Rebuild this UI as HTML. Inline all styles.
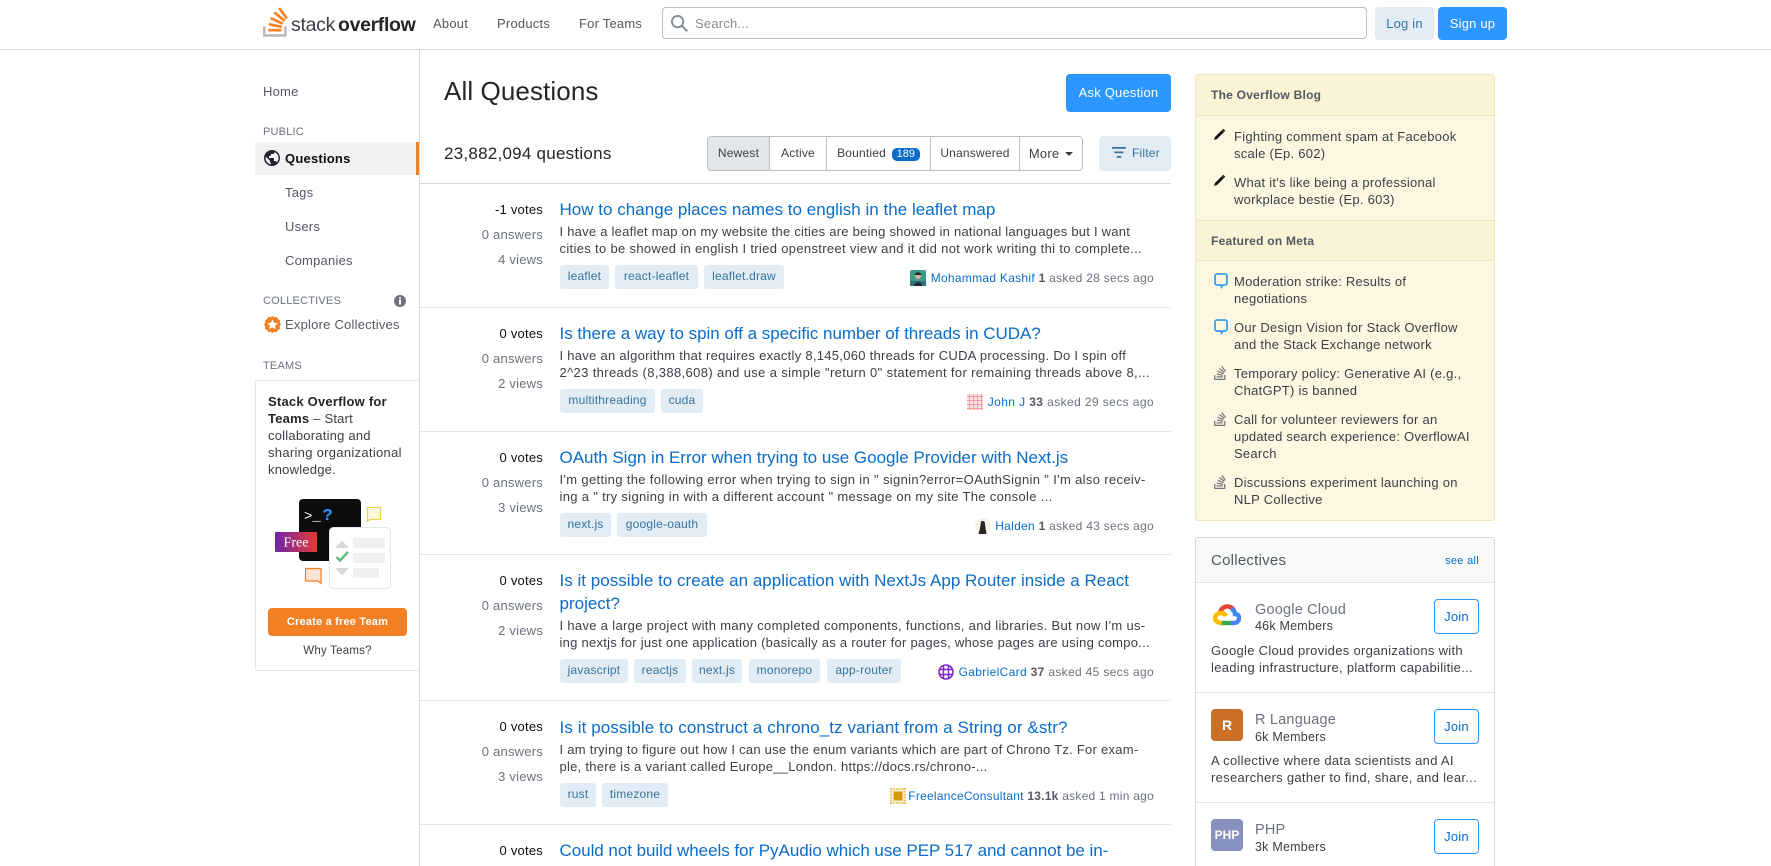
<!DOCTYPE html>
<html lang="en"><head><meta charset="utf-8"><title>All Questions - Stack Overflow</title>
<style>
*{box-sizing:border-box}
html,body{margin:0;padding:0;width:1771px;height:866px;overflow:hidden;background:#fff;font-family:"Liberation Sans",sans-serif;color:#3b4045}
#p{position:relative;width:1771px;height:866px;overflow:hidden;background:#fff}
a{color:inherit;text-decoration:none}
.t{position:absolute;white-space:nowrap;line-height:20px;height:20px;margin-top:-9px;font-size:13px;letter-spacing:.22px}
.b{position:absolute}
.title{font-size:17px;color:#0a6cc9;letter-spacing:0;left:559.5px}
.ex{color:#3b4045;left:559.5px;letter-spacing:.24px;margin-top:-10px}
.st{right:1228px;color:#6a737c;text-align:right}
.vt{color:#0c0d0e}
.tag{position:absolute;height:24px;line-height:23px;background:#e1ecf4;color:#39739d;border-radius:3px;font-size:12px;text-align:center;letter-spacing:.2px;white-space:nowrap}
.meta{right:617px;font-size:12px;color:#6a737c;letter-spacing:.28px;margin-top:-10px}
.meta a{color:#0a6cc9}.meta b{color:#525960}
.sep{position:absolute;left:420px;width:751px;height:1px;background:#e3e6e8}
.nav{color:#525960}
.sec{font-size:11px;color:#6a737c;letter-spacing:.2px}
.y{color:#3b4045;left:1234px;letter-spacing:.26px;margin-top:-10px}
.h{left:1211px;font-weight:bold;font-size:12px;color:#525960;letter-spacing:.25px;margin-top:-10px}
.d{left:1211px;letter-spacing:.3px;color:#3b4045}
.cn{left:1255px;font-size:14.5px;color:#6a737c;letter-spacing:.2px}
.cm{left:1255px;font-size:12.5px;color:#3b4045;letter-spacing:.22px}
.join{position:absolute;left:1434px;width:45px;height:35px;line-height:33px;text-align:center;border:1px solid #2c97ff;border-radius:4px;color:#0a6cc9;font-size:13px;letter-spacing:.2px;background:#fff}
.fb{height:100%;text-align:center;line-height:33px;font-size:12px;color:#3b4045;border-right:1px solid #babfc4;letter-spacing:.2px;white-space:nowrap;flex:none}
</style></head><body><div id="p">

<!-- header -->
<div class="b" style="left:0;top:49px;width:1771px;height:1px;background:#d6d9dc"></div>
<svg class="b" style="left:263px;top:7px" width="25" height="30" viewBox="22.6 15 73.1 86.5"><polygon fill="#BCBBBB" points="84.4,93.8 84.4,70.6 92.1,70.6 92.1,101.5 22.6,101.5 22.6,70.6 30.3,70.6 30.3,93.8"/><path fill="#F48024" d="M38.8,68.4l37.8,7.9l1.6-7.6l-37.8-7.9L38.8,68.4z M43.8,50.4l35,16.3l3.2-7l-35-16.4L43.8,50.4z M53.5,33.2l29.7,24.7l4.9-5.9L58.4,27.3L53.5,33.2z M72.7,15l-6.2,4.6l23,31l6.2-4.6L72.7,15z M38,86h38.6v-7.7H38V86z"/></svg>
<div class="t" style="left:291px;top:24px;font-size:19.5px;color:#3b4045;letter-spacing:-.3px">stack<b style="color:#232629;margin-left:3px;letter-spacing:-.35px">overflow</b></div>
<a class="t nav" style="left:433px;top:23px">About</a>
<a class="t nav" style="left:497px;top:23px">Products</a>
<a class="t nav" style="left:579px;top:23px">For Teams</a>
<div class="b" style="left:662px;top:7px;width:705px;height:32px;border:1px solid #babfc4;border-radius:4px;background:#fff"></div>
<svg class="b" style="left:671px;top:15px" width="17" height="17" viewBox="0 0 18 18"><path fill="#838c95" d="m18 16.5-5.14-5.18h-.35a7 7 0 1 0-1.19 1.19v.35L16.5 18l1.5-1.5ZM12 7A5 5 0 1 1 2 7a5 5 0 0 1 10 0Z"/></svg>
<div class="t" style="left:695px;top:23px;color:#838c95">Search...</div>
<a class="b" style="left:1375px;top:7px;width:59px;height:33px;line-height:33px;background:#e1ecf4;color:#39739d;border-radius:4px;text-align:center;font-size:13px;letter-spacing:.2px">Log in</a>
<a class="b" style="left:1438px;top:7px;width:69px;height:33px;line-height:33px;background:#2c97ff;color:#fff;border-radius:4px;text-align:center;font-size:13px;letter-spacing:.2px">Sign up</a>

<!-- left nav -->
<div class="b" style="left:419px;top:50px;width:1px;height:816px;background:#d6d9dc"></div>
<a class="t nav" style="left:263px;top:91px">Home</a>
<div class="t sec" style="left:263px;top:131px">PUBLIC</div>
<div class="b" style="left:255px;top:142px;width:164px;height:33px;background:#f1f2f3;border-right:3px solid #f48024"></div>
<svg class="b" style="left:263px;top:149px" width="18" height="18" viewBox="0 0 18 18"><path fill="#232629" d="M9 1C4.64 1 1 4.64 1 9c0 4.36 3.64 8 8 8 4.36 0 8-3.64 8-8 0-4.36-3.64-8-8-8ZM8 15.32a6.46 6.46 0 0 1-4.3-2.74 6.46 6.46 0 0 1-.93-5.01L7 11.8v.8c0 .88.12 1.32 1 1.32v1.4Zm5.72-2.02c-.24-.74-.9-1.3-1.72-1.3h-1V9.7c0-.44-.36-.7-.8-.7H6V7h1c.44 0 1-.56 1-1V5h2c.88 0 1.4-.72 1.4-1.6v-.33a6.45 6.45 0 0 1 3.83 3.84 6.45 6.45 0 0 1-1.51 6.39Z"/></svg>
<a class="t" style="left:285px;top:158px;font-weight:bold;color:#0c0d0e">Questions</a>
<a class="t nav" style="left:285px;top:192px">Tags</a>
<a class="t nav" style="left:285px;top:226px">Users</a>
<a class="t nav" style="left:285px;top:260px">Companies</a>
<div class="t sec" style="left:263px;top:300px">COLLECTIVES</div>
<svg class="b" style="left:394px;top:295px" width="12" height="12" viewBox="0 0 12 12"><circle cx="6" cy="6" r="6" fill="#6a737c"/><rect x="5" y="5" width="2" height="4.6" fill="#fff"/><rect x="5" y="2.4" width="2" height="1.8" fill="#fff"/></svg>
<svg class="b" style="left:264px;top:316px" width="17" height="17" viewBox="0 0 17 17"><path fill="#f48024" d="M8.5 0l2 1.300 2.400-.300 1.100 2.100 2.100 1.100-.300 2.400L17 8.500l-1.300 2 .300 2.400-2.100 1.100-1.100 2.100-2.400-.300-1.900 1.200-2-1.300-2.400.300L3 14l-2.100-1.100.300-2.400L0 8.500l1.300-2L1 4.100 3.100 3l1.100-2.100 2.400.300z"/><path fill="#fff" d="M8.500 3.200l1.600 3.500 3.700.400-2.800 2.500.800 3.700-3.300-1.900-3.300 1.900.800-3.700-2.800-2.500 3.700-.400z"/></svg>
<a class="t nav" style="left:285px;top:324px">Explore Collectives</a>
<div class="t sec" style="left:263px;top:365px">TEAMS</div>
<div class="b" style="left:255px;top:380px;width:165px;height:291px;border:1px solid #e3e6e8;border-right:none;border-radius:3px 0 0 3px"></div>
<div class="t" style="left:268px;top:401px;color:#232629;font-weight:bold">Stack Overflow for</div>
<div class="t" style="left:268px;top:418px"><b style="color:#232629">Teams</b> – Start</div>
<div class="t" style="left:268px;top:435px">collaborating and</div>
<div class="t" style="left:268px;top:452px;letter-spacing:.3px">sharing organizational</div>
<div class="t" style="left:268px;top:469px">knowledge.</div>
<svg class="b" style="left:270px;top:495px;font-family:'Liberation Mono',monospace" width="130" height="100" viewBox="270 495 130 100">
<defs><linearGradient id="fg" x1="0" x2="1"><stop offset="0" stop-color="#6f25a8"/><stop offset="1" stop-color="#e23b33"/></linearGradient></defs>
<rect x="299" y="499" width="62" height="62" rx="4" fill="#0b0c0e"/>
<text x="304" y="520" font-size="14" fill="#fff">&gt;_</text><text x="322.500" y="520" font-size="17" font-weight="bold" fill="#2c97ff">?</text>
<rect x="275" y="532" width="42" height="20" rx="1" fill="url(#fg)"/>
<text x="296" y="546.500" font-size="14" text-anchor="middle" fill="#fff" style="font-family:'Liberation Serif',serif">Free</text>
<rect x="329.500" y="527.500" width="61" height="61" rx="4" fill="#fff" stroke="#e3e6e8"/>
<path fill="#d6d9dc" d="M335 548l7-7.500 7 7.500zM335 568h14l-7 7.500z"/>
<path fill="none" stroke="#5eba7d" stroke-width="2.400" d="M336.500 557l3.500 3.500 8-8.500"/>
<rect x="353" y="538" width="32" height="10" fill="#eff0f1"/><rect x="353" y="553" width="32" height="10" fill="#eff0f1"/><rect x="353" y="568" width="26" height="10" fill="#eff0f1"/>
<path fill="#fdf7e2" stroke="#f4cf5a" stroke-width="1.200" d="M367.500 507.500h13v12h-10.500l-2.500 2z"/>
<path fill="#fbe3d8" stroke="#f48024" stroke-width="1.200" d="M305.500 568.500h15.500v15l-3-2.500h-12.500z"/>
</svg>
<a class="b" style="left:268px;top:608px;width:139px;height:28px;line-height:29px;background:#f48024;color:#fff;border-radius:4px;text-align:center;font-size:11px;font-weight:bold;letter-spacing:.2px">Create a free Team</a>
<a class="t" style="left:268px;width:139px;text-align:center;top:650px;font-size:11.500px">Why Teams?</a>

<!-- main head -->
<h1 class="t" style="left:444px;top:90px;margin:-9px 0 0;font-size:26px;font-weight:normal;color:#232629;letter-spacing:.1px">All Questions</h1>
<a class="b" style="left:1066px;top:74px;width:105px;height:38px;line-height:38px;background:#2c97ff;color:#fff;border-radius:4px;text-align:center;font-size:13px;letter-spacing:.2px">Ask Question</a>
<div class="t" style="left:444px;top:153px;font-size:17px;color:#232629;letter-spacing:.25px">23,882,094 questions</div>
<div class="b" style="left:707px;top:136px;width:376px;height:35px;border:1px solid #babfc4;border-radius:4px;display:flex;overflow:hidden">
<div class="fb" style="width:62px;background:#e3e6e8;color:#3b4045">Newest</div>
<div class="fb" style="width:57px">Active</div>
<div class="fb" style="width:104px">Bountied <span style="display:inline-block;background:#0a6cc9;color:#fff;border-radius:5px;font-size:11px;line-height:13px;padding:0 5px;margin-left:2px;letter-spacing:0">189</span></div>
<div class="fb" style="width:89px">Unanswered</div>
<div class="fb" style="flex:1;border:none;font-size:13px">More <span style="display:inline-block;border:4px solid transparent;border-top-color:#3b4045;border-bottom:none;margin:0 0 2px 2px"></span></div>
</div>
<a class="b" style="left:1099px;top:136px;width:72px;height:35px;background:#e1ecf4;border-radius:4px;color:#39739d;font-size:12px;line-height:35px;padding-left:33px;letter-spacing:.2px">Filter</a>
<svg class="b" style="left:1112px;top:147px" width="14" height="11" viewBox="0 0 14 11"><path fill="#39739d" d="M0 0h14v1.800H0zM2.500 4.500h9v1.800h-9zM4.800 9h4.400v1.800H4.800z"/></svg>
<div class="sep" style="top:183px;background:#d6d9dc"></div>

<!-- Q1 -->
<div class="t st vt" style="top:209px">-1 votes</div><div class="t st" style="top:234px">0 answers</div><div class="t st" style="top:259px">4 views</div>
<a class="t title" style="top:209px;letter-spacing:.02px">How to change places names to english in the leaflet map</a>
<div class="t ex" style="top:232px">I have a leaflet map on my website the cities are being showed in national languages but I want</div>
<div class="t ex" style="top:249px;letter-spacing:.33px">cities to be showed in english I tried openstreet view and it did not work writing thi to complete...</div>
<a class="tag" style="left:560px;top:265px;width:49px">leaflet</a><a class="tag" style="left:615px;top:265px;width:83px">react-leaflet</a><a class="tag" style="left:704px;top:265px;width:80px">leaflet.draw</a>
<svg class="b" style="left:910px;top:270px" width="16" height="16" viewBox="0 0 16 16"><rect width="16" height="16" rx="2" fill="#3f9a8e"/><rect y="11" width="16" height="5" fill="#2f6f78"/><circle cx="8" cy="6" r="3.200" fill="#c9b49a"/><path fill="#1d2a33" d="M4.500 5C5 1.500 11 1.500 11.500 5zM4 16c0-5 8-5 8 0z"/></svg>
<div class="t meta" style="top:278px"><a>Mohammad Kashif</a> <b>1</b> asked 28 secs ago</div>
<div class="sep" style="top:307px"></div>
<!-- Q2 -->
<div class="t st vt" style="top:333px">0 votes</div><div class="t st" style="top:358px">0 answers</div><div class="t st" style="top:383px">2 views</div>
<a class="t title" style="top:333px;letter-spacing:-.02px">Is there a way to spin off a specific number of threads in CUDA?</a>
<div class="t ex" style="top:356px;letter-spacing:.28px">I have an algorithm that requires exactly 8,145,060 threads for CUDA processing. Do I spin off</div>
<div class="t ex" style="top:373px;letter-spacing:.36px">2^23 threads (8,388,608) and use a simple "return 0" statement for remaining threads above 8,...</div>
<a class="tag" style="left:560px;top:389px;width:95px">multithreading</a><a class="tag" style="left:661px;top:389px;width:42px">cuda</a>
<svg class="b" style="left:967px;top:394px" width="16" height="16" viewBox="0 0 16 16"><rect width="16" height="16" fill="#fde4e6"/><path stroke="#f19aa3" stroke-width="1" fill="none" d="M0 2.500h16M0 6.500h16M0 10.500h16M0 14.500h16M2.500 0v16M6.500 0v16M10.500 0v16M14.500 0v16"/></svg>
<div class="t meta" style="top:402px;letter-spacing:.4px"><a>John J</a> <b>33</b> asked 29 secs ago</div>
<div class="sep" style="top:431px"></div>
<!-- Q3 -->
<div class="t st vt" style="top:457px">0 votes</div><div class="t st" style="top:482px">0 answers</div><div class="t st" style="top:507px">3 views</div>
<a class="t title" style="top:457px;letter-spacing:-.01px">OAuth Sign in Error when trying to use Google Provider with Next.js</a>
<div class="t ex" style="top:480px;letter-spacing:.34px">I'm getting the following error when trying to sign in " signin?error=OAuthSignin " I'm also receiv-</div>
<div class="t ex" style="top:497px;letter-spacing:.32px">ing a " try signing in with a different account " message on my site The console ...</div>
<a class="tag" style="left:560px;top:513px;width:51px">next.js</a><a class="tag" style="left:617px;top:513px;width:90px">google-oauth</a>
<svg class="b" style="left:975px;top:518px" width="16" height="16" viewBox="0 0 16 16"><circle cx="8" cy="8" r="8" fill="#f4f3e4"/><path fill="#2b2523" d="M6 3.500c2-1.500 4.500 0 4 3l1.500 9.500h-8l1.500-6z"/></svg>
<div class="t meta" style="top:526px"><a>Halden</a> <b>1</b> asked 43 secs ago</div>
<div class="sep" style="top:554px"></div>
<!-- Q4 -->
<div class="t st vt" style="top:580px">0 votes</div><div class="t st" style="top:605px">0 answers</div><div class="t st" style="top:630px">2 views</div>
<a class="t title" style="top:580px;letter-spacing:.02px">Is it possible to create an application with NextJs App Router inside a React</a>
<a class="t title" style="top:603px">project?</a>
<div class="t ex" style="top:626px;letter-spacing:.32px">I have a large project with many completed components, functions, and libraries. But now I'm us-</div>
<div class="t ex" style="top:643px;letter-spacing:.26px">ing nextjs for just one application (basically as a router for pages, whose pages are using compo...</div>
<a class="tag" style="left:560px;top:659px;width:68px">javascript</a><a class="tag" style="left:634px;top:659px;width:52px">reactjs</a><a class="tag" style="left:692px;top:659px;width:50px">next.js</a><a class="tag" style="left:749px;top:659px;width:71px">monorepo</a><a class="tag" style="left:827px;top:659px;width:74px">app-router</a>
<svg class="b" style="left:938px;top:664px" width="16" height="16" viewBox="0 0 16 16"><circle cx="8" cy="8" r="7" fill="none" stroke="#7a1fd1" stroke-width="1.500"/><path stroke="#7a1fd1" stroke-width="1.400" fill="none" d="M1 5.500h14M1 10.500h14M5.500 1v14M10.500 1v14"/></svg>
<div class="t meta" style="top:672px;letter-spacing:.33px"><a>GabrielCard</a> <b>37</b> asked 45 secs ago</div>
<div class="sep" style="top:700px"></div>
<!-- Q5 -->
<div class="t st vt" style="top:726px">0 votes</div><div class="t st" style="top:751px">0 answers</div><div class="t st" style="top:776px">3 views</div>
<a class="t title" style="top:727px;letter-spacing:.09px">Is it possible to construct a chrono_tz variant from a String or &amp;str?</a>
<div class="t ex" style="top:750px;letter-spacing:.26px">I am trying to figure out how I can use the enum variants which are part of Chrono Tz. For exam-</div>
<div class="t ex" style="top:767px;letter-spacing:.27px">ple, there is a variant called Europe__London. https://docs.rs/chrono-...</div>
<a class="tag" style="left:560px;top:783px;width:36px">rust</a><a class="tag" style="left:602px;top:783px;width:66px">timezone</a>
<svg class="b" style="left:890px;top:788px" width="16" height="16" viewBox="0 0 16 16"><rect width="16" height="16" fill="#fbf0d0"/><rect x="3.500" y="3.500" width="9" height="9" fill="#d9960f"/><path stroke="#d9960f" stroke-dasharray="1.500 1.500" fill="none" d="M0 1h16M0 15h16M1 0v16M15 0v16"/></svg>
<div class="t meta" style="top:796px;letter-spacing:.25px"><a>FreelanceConsultant</a> <b>13.1k</b> asked 1 min ago</div>
<div class="sep" style="top:824px"></div>
<!-- Q6 -->
<div class="t st vt" style="top:850px">0 votes</div>
<a class="t title" style="top:850px;letter-spacing:-.04px">Could not build wheels for PyAudio which use PEP 517 and cannot be in-</a>

<!-- yellow box -->
<div class="b" style="left:1195px;top:74px;width:300px;height:447px;background:#fdf7e2;border:1px solid #f1e5bc;border-radius:3px"></div>
<div class="b" style="left:1196px;top:75px;width:298px;height:41px;background:#fbf3d5;border-bottom:1px solid #f1e5bc"></div>
<div class="b" style="left:1196px;top:220px;width:298px;height:41px;background:#fbf3d5;border-top:1px solid #f1e5bc;border-bottom:1px solid #f1e5bc"></div>
<div class="t h" style="top:95px">The Overflow Blog</div>
<svg class="b" style="left:1213px;top:129px" width="12" height="12" viewBox="0 0 12 12"><path fill="#0c0d0e" d="M9 1l2 2-7 7-3 1 1-3zM9.800.2a.8.800 0 0 1 1 0l1 1a.8.800 0 0 1 0 1l-.6.600-2-2z"/></svg>
<div class="t y" style="top:137px">Fighting comment spam at Facebook</div><div class="t y" style="top:154px">scale (Ep. 602)</div>
<svg class="b" style="left:1213px;top:175px" width="12" height="12" viewBox="0 0 12 12"><path fill="#0c0d0e" d="M9 1l2 2-7 7-3 1 1-3zM9.800.2a.8.800 0 0 1 1 0l1 1a.8.800 0 0 1 0 1l-.6.600-2-2z"/></svg>
<div class="t y" style="top:183px">What it's like being a professional</div><div class="t y" style="top:200px">workplace bestie (Ep. 603)</div>
<div class="t h" style="top:241px">Featured on Meta</div>
<svg class="b" style="left:1214px;top:273px" width="14" height="16" viewBox="0 0 14 16"><path fill="none" stroke="#3a9fe8" stroke-width="1.800" d="M3 1h8a2 2 0 0 1 2 2v7a2 2 0 0 1-2 2H9l-1.500 2L7 12H3a2 2 0 0 1-2-2V3a2 2 0 0 1 2-2z"/></svg>
<div class="t y" style="top:282px">Moderation strike: Results of</div><div class="t y" style="top:299px">negotiations</div>
<svg class="b" style="left:1214px;top:319px" width="14" height="16" viewBox="0 0 14 16"><path fill="none" stroke="#3a9fe8" stroke-width="1.800" d="M3 1h8a2 2 0 0 1 2 2v7a2 2 0 0 1-2 2H9l-1.500 2L7 12H3a2 2 0 0 1-2-2V3a2 2 0 0 1 2-2z"/></svg>
<div class="t y" style="top:328px">Our Design Vision for Stack Overflow</div><div class="t y" style="top:345px">and the Stack Exchange network</div>
<svg class="b" style="left:1214px;top:366px;opacity:.8" width="12" height="14" viewBox="22.600 15 73.100 86.500"><polygon fill="#525960" points="84.400,93.800 84.400,70.600 92.100,70.600 92.100,101.500 22.600,101.500 22.600,70.600 30.300,70.600 30.300,93.800"/><path fill="#525960" d="M38.800,68.400l37.800,7.900l1.600-7.600l-37.800-7.900L38.800,68.400z M43.800,50.400l35,16.300l3.200-7l-35-16.400L43.800,50.400z M53.500,33.200l29.700,24.700l4.900-5.900L58.400,27.300L53.500,33.200z M72.700,15l-6.200,4.600l23,31l6.200-4.600L72.700,15z M38,86h38.600v-7.700H38V86z"/></svg>
<div class="t y" style="top:374px">Temporary policy: Generative AI (e.g.,</div><div class="t y" style="top:391px">ChatGPT) is banned</div>
<svg class="b" style="left:1214px;top:412px;opacity:.8" width="12" height="14" viewBox="22.600 15 73.100 86.500"><polygon fill="#525960" points="84.400,93.800 84.400,70.600 92.100,70.600 92.100,101.500 22.600,101.500 22.600,70.600 30.300,70.600 30.300,93.800"/><path fill="#525960" d="M38.800,68.400l37.800,7.900l1.600-7.600l-37.800-7.900L38.800,68.400z M43.800,50.400l35,16.300l3.200-7l-35-16.400L43.800,50.400z M53.500,33.200l29.700,24.700l4.900-5.900L58.400,27.300L53.500,33.200z M72.700,15l-6.200,4.600l23,31l6.200-4.600L72.700,15z M38,86h38.600v-7.700H38V86z"/></svg>
<div class="t y" style="top:420px">Call for volunteer reviewers for an</div><div class="t y" style="top:437px;letter-spacing:.22px">updated search experience: OverflowAI</div><div class="t y" style="top:454px">Search</div>
<svg class="b" style="left:1214px;top:475px;opacity:.8" width="12" height="14" viewBox="22.600 15 73.100 86.500"><polygon fill="#525960" points="84.400,93.800 84.400,70.600 92.100,70.600 92.100,101.500 22.600,101.500 22.600,70.600 30.300,70.600 30.300,93.800"/><path fill="#525960" d="M38.800,68.400l37.800,7.900l1.600-7.600l-37.800-7.900L38.800,68.400z M43.800,50.400l35,16.300l3.200-7l-35-16.400L43.800,50.400z M53.500,33.200l29.700,24.700l4.900-5.900L58.400,27.300L53.500,33.200z M72.700,15l-6.200,4.600l23,31l6.200-4.600L72.700,15z M38,86h38.600v-7.700H38V86z"/></svg>
<div class="t y" style="top:483px">Discussions experiment launching on</div><div class="t y" style="top:500px">NLP Collective</div>

<!-- collectives -->
<div class="b" style="left:1195px;top:537px;width:300px;height:340px;border:1px solid #d6d9dc;border-radius:3px;background:#fff"></div>
<div class="b" style="left:1196px;top:538px;width:298px;height:45px;background:#f8f9f9;border-bottom:1px solid #e3e6e8"></div>
<div class="t" style="left:1211px;top:560px;font-size:15px;color:#525960;letter-spacing:.25px">Collectives</div>
<a class="t" style="right:292px;top:560px;font-size:11px;color:#0a6cc9;letter-spacing:.3px">see all</a>
<svg class="b" style="left:1213px;top:604px" width="28" height="22" viewBox="0 0 28 22"><path fill="none" stroke="#ea4335" stroke-width="4.400" d="M7 9C8 4 12 2 15 2.500c3 .3 5 2 6 4"/><path fill="none" stroke="#4285f4" stroke-width="4.400" d="M18 5c3 1 4 3 4 5 3 0 4 2 4 4 0 3-2 5-5 5h-4"/><path fill="none" stroke="#34a853" stroke-width="4.400" d="M7 19h11"/><path fill="none" stroke="#fbbc05" stroke-width="4.400" d="M9 19c-4 0-7-2-7-5s3-5 6-5c2 0 4 1 5 3"/></svg>
<div class="t cn" style="top:609px">Google Cloud</div><div class="t cm" style="top:625px">46k Members</div>
<a class="join" style="top:599px">Join</a>
<div class="t d" style="top:650px">Google Cloud provides organizations with</div><div class="t d" style="top:667px">leading infrastructure, platform capabilitie...</div>
<div class="b" style="left:1196px;top:692px;width:298px;height:1px;background:#e3e6e8"></div>
<div class="b" style="left:1211px;top:709px;width:32px;height:32px;background:#cc6f27;border-radius:4px;color:#fff;font-weight:bold;font-size:14px;line-height:32px;text-align:center">R</div>
<div class="t cn" style="top:719px">R Language</div><div class="t cm" style="top:736px">6k Members</div>
<a class="join" style="top:709px">Join</a>
<div class="t d" style="top:760px">A collective where data scientists and AI</div><div class="t d" style="top:777px">researchers gather to find, share, and lear...</div>
<div class="b" style="left:1196px;top:802px;width:298px;height:1px;background:#e3e6e8"></div>
<div class="b" style="left:1211px;top:819px;width:32px;height:32px;background:#8892bf;border-radius:4px;color:#fff;font-weight:bold;font-size:12px;line-height:32px;text-align:center">PHP</div>
<div class="t cn" style="top:829px">PHP</div><div class="t cm" style="top:846px">3k Members</div>
<a class="join" style="top:819px">Join</a>
<div class="t d" style="top:873px">A collective where developers working with PHP can</div>
</div></body></html>
